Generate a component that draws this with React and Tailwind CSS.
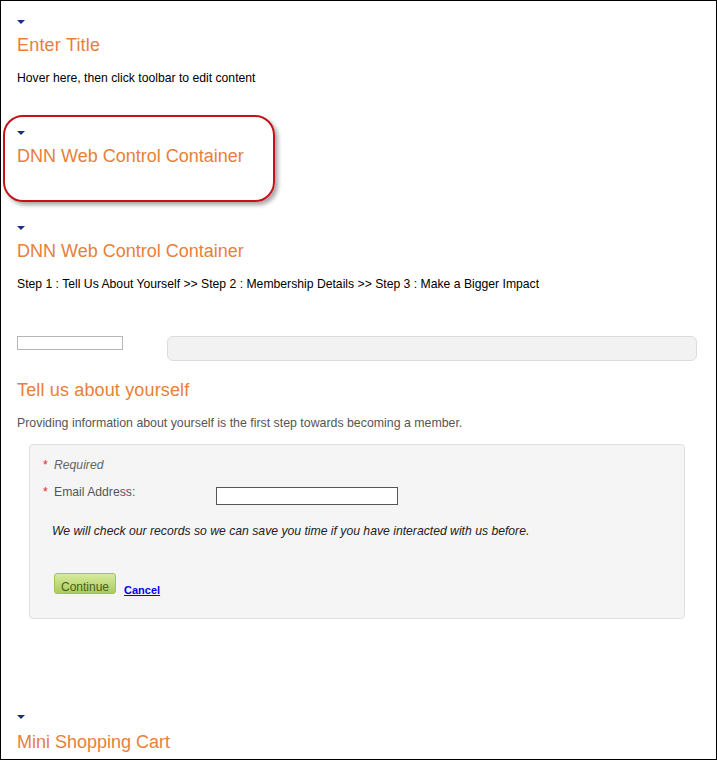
function Arrow({ className = '' }) {
  return (
    <svg width="8" height="4" viewBox="0 0 8 4" className={`block ${className}`}>
      <polygon points="0,0 8,0 4,4" fill="#1b2f86" />
    </svg>
  )
}

function Titulo({ children, className = '' }) {
  return <h2 className={`text-[18px] leading-[22px] text-[#e8803a] ${className}`}>{children}</h2>
}

export default function App() {
  return (
    <div
      className="relative w-[717px] h-[760px] box-border border border-black bg-white pl-[16px] overflow-hidden text-[12.2px] leading-[16px] text-black"
      style={{ fontFamily: '"Liberation Sans", Arial, sans-serif' }}
    >
      {/* Enter Title */}
      <Arrow className="mt-[19px]" />
      <Titulo className="mt-[10px] tracking-[0.2px]">Enter Title</Titulo>
      <p className="mt-[14px]">Hover here, then click toolbar to edit content</p>

      {/* contenedor resaltado */}
      <Arrow className="mt-[45px]" />
      <Titulo className="mt-[10px]">DNN Web Control Container</Titulo>
      <div className="absolute left-[2px] top-[114px] w-[272px] h-[87px] rounded-[20px] border-2 border-[#c4121a] shadow-[3px_3px_4px_rgba(0,0,0,0.35)] pointer-events-none" />

      {/* segundo contenedor */}
      <Arrow className="mt-[59px]" />
      <Titulo className="mt-[10px]">DNN Web Control Container</Titulo>
      <p className="mt-[14px]">
        Step 1 : Tell Us About Yourself &gt;&gt; Step 2 : Membership Details &gt;&gt; Step 3 : Make a Bigger Impact
      </p>

      <div className="mt-[44px] flex items-start gap-[44px]">
        <div className="w-[106px] h-[14px] border border-[#b5b5b5] bg-white" />
        <div className="w-[530px] h-[25px] rounded-md border border-[#dcdcdc] bg-[#f2f2f2]" />
      </div>

      <Titulo className="mt-[18px] tracking-[0.15px]">Tell us about yourself</Titulo>
      <p className="mt-[14px] text-[12.35px] text-[#555]">
        Providing information about yourself is the first step towards becoming a member.
      </p>

      <div className="mt-[13px] ml-[12px] w-[656px] h-[175px] box-border rounded border border-[#e0e0e0] bg-[#f5f5f5] pt-[12px] pl-[13px]">
        <div className="flex items-baseline">
          <span className="text-[#e8282b] w-[11px]">*</span>
          <span className="italic text-[#666]">Required</span>
        </div>
        <div className="mt-[11px] flex items-start">
          <span className="text-[#e8282b] w-[11px]">*</span>
          <span className="text-[#555] w-[162px]">Email Address:</span>
          <input type="text" className="mt-[3px] w-[182px] h-[18px] border border-[#555] bg-white outline-none" />
        </div>
        <p className="mt-[18px] ml-[9px] italic text-[#222]">
          We will check our records so we can save you time if you have interacted with us before.
        </p>
        <div className="mt-[34px] ml-[11px] flex items-start gap-[8px]">
          <button className="w-[62px] h-[21px] box-border rounded-[3px] border border-[#a3c25b] bg-gradient-to-b from-[#d8eb9c] to-[#a9cc5c] text-[12px] leading-[12px] text-[#4b5e24] pt-[7px]">
            Continue
          </button>
          <a href="#" className="mt-[10px] text-[11px] leading-[14px] font-bold text-[#0000ee] underline">Cancel</a>
        </div>
      </div>

      {/* Mini carrito */}
      <Arrow className="mt-[96px]" />
      <Titulo className="mt-[12px]">Mini Shopping Cart</Titulo>
    </div>
  )
}
